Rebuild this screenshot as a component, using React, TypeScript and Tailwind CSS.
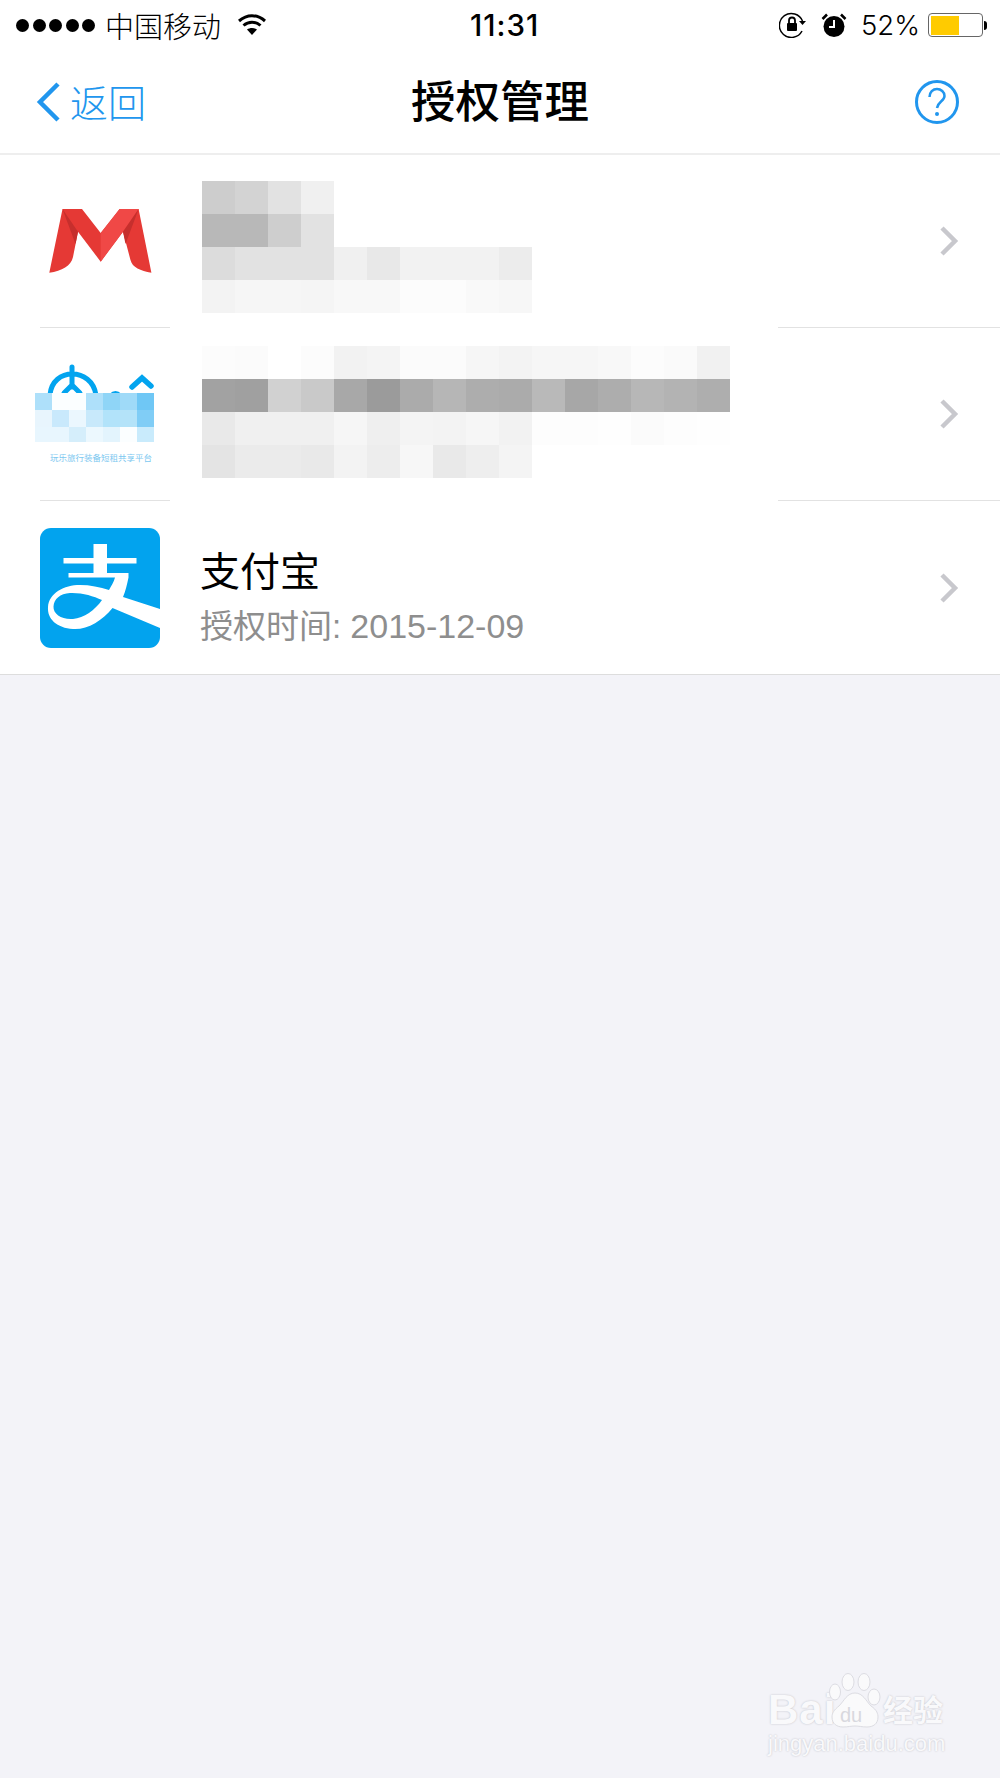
const grayRow1 = [
  ["bg-[#cdcdcd]", "bg-[#d3d3d3]", "bg-[#e2e2e2]", "bg-[#f0f0f0]", "", "", "", "", "", ""],
  ["bg-[#b8b8b8]", "bg-[#b8b8b8]", "bg-[#cecece]", "bg-[#e2e2e2]", "", "", "", "", "", ""],
  ["bg-[#dcdcdc]", "bg-[#e2e2e2]", "bg-[#e2e2e2]", "bg-[#e2e2e2]", "bg-[#f0f0f0]", "bg-[#e8e8e8]", "bg-[#f2f2f2]", "bg-[#f2f2f2]", "bg-[#f2f2f2]", "bg-[#ececec]"],
  ["bg-[#f3f3f3]", "bg-[#f6f6f6]", "bg-[#f6f6f6]", "bg-[#f5f5f5]", "bg-[#f8f8f8]", "bg-[#f8f8f8]", "bg-[#fcfcfc]", "bg-[#fcfcfc]", "bg-[#f9f9f9]", "bg-[#f7f7f7]"],
]

const grayRow2 = [
  ["bg-[#fcfcfc]", "bg-[#fbfbfb]", "bg-white", "bg-[#fcfcfc]", "bg-[#f2f2f2]", "bg-[#f4f4f4]", "bg-[#fbfbfb]", "bg-[#fbfbfb]", "bg-[#f6f6f6]", "bg-[#f3f3f3]", "bg-[#f6f6f6]", "bg-[#f6f6f6]", "bg-[#f8f8f8]", "bg-[#fcfcfc]", "bg-[#fafafa]", "bg-[#f1f1f1]"],
  ["bg-[#a2a2a2]", "bg-[#a0a0a0]", "bg-[#d1d1d1]", "bg-[#c9c9c9]", "bg-[#a8a8a8]", "bg-[#9b9b9b]", "bg-[#ababab]", "bg-[#b6b6b6]", "bg-[#adadad]", "bg-[#ababab]", "bg-[#b9b9b9]", "bg-[#a7a7a7]", "bg-[#adadad]", "bg-[#b7b7b7]", "bg-[#b3b3b3]", "bg-[#aeaeae]"],
  ["bg-[#e9e9e9]", "bg-[#f0f0f0]", "bg-[#f0f0f0]", "bg-[#f0f0f0]", "bg-[#f6f6f6]", "bg-[#efefef]", "bg-[#f4f4f4]", "bg-[#f3f3f3]", "bg-[#f6f6f6]", "bg-[#f2f2f2]", "bg-[#fdfdfd]", "bg-[#fdfdfd]", "bg-[#fefefe]", "bg-[#fbfbfb]", "bg-[#fdfdfd]", "bg-[#fefefe]"],
  ["bg-[#e4e4e4]", "bg-[#ebebeb]", "bg-[#ebebeb]", "bg-[#e9e9e9]", "bg-[#f3f3f3]", "bg-[#ededed]", "bg-[#f7f7f7]", "bg-[#e9e9e9]", "bg-[#eeeeee]", "bg-[#f4f4f4]", "", "", "", "", "", ""],
]

const blueCells = [
  ["bg-[#aee0fa]", "bg-[#fbfeff]", "bg-[#fbfeff]", "bg-[#aee0fa]", "bg-[#8fd5f7]", "bg-[#9fdaf8]", "bg-[#6fc7f5]"],
  ["bg-[#e8f5fd]", "bg-[#c9e9fc]", "bg-[#ebf7fe]", "bg-[#c8e9fb]", "bg-[#b2e3fa]", "bg-[#b4e3f9]", "bg-[#80cdf6]"],
  ["bg-[#e8f6fe]", "bg-[#e8f6fe]", "bg-[#d5eefb]", "bg-[#ecf8fe]", "bg-[#e3f4fd]", "bg-[#fbfeff]", "bg-[#c9ebfc]"],
]

function Chevron() {
  return (
    <svg className="w-[22px] h-[34px] self-center ml-auto mr-[40px]" viewBox="0 0 22 34" fill="none">
      <path d="M4 4l13 13L4 30" stroke="#c8c8cd" strokeWidth="4.5" />
    </svg>
  )
}

function Mosaic({ rows, className }: { rows: string[][]; className: string }) {
  return (
    <div className={className}>
      {rows.map((row, i) => (
        <div key={i} className="flex">
          {row.map((c, j) => (
            <div key={j} className={`w-[33px] h-[33px] ${c}`} />
          ))}
        </div>
      ))}
    </div>
  )
}

function Separator() {
  return (
    <div className="flex justify-between pl-10 h-px">
      <div className="w-[130px] bg-[#e2e2e2]" />
      <div className="w-[222px] bg-[#e2e2e2]" />
    </div>
  )
}

function MailLogo() {
  return (
    <svg className="w-[120px] h-[120px] shrink-0 mt-[26px]" viewBox="0 0 120 120">
      <path d="M22.5 28h19.5L60.7 52l18.9-24h19l12.8 63.7c-11-2-19-5-21-13L83 50.7 60.7 80.7 38 50.7 33 76c-2 9-11 14-23.7 15.7z" fill="#e53935" />
      <path d="M60.7 52L79.6 28h19L83 50.7 60.7 80.7z" fill="#f04846" />
      <path d="M22.5 28l15.5 22.700-2.500 12.300z" fill="#c62f2d" />
      <path d="M98.600 28L83 50.700l2.500 12.300z" fill="#c62f2d" />
    </svg>
  )
}

function RentLogo() {
  return (
    <div className="relative w-[120px] h-[120px] shrink-0 mt-[25px]">
      <svg className="w-[120px] h-[120px]" viewBox="0 0 120 120" fill="none" stroke="#02a4ef" strokeWidth="5" strokeLinecap="round">
        <path d="M10 42c2-28 42-28 46 0M32 14v20M24 40l8-8 8 8" />
        <path d="M92 34l10-9 9 8" strokeWidth="5.500" />
        <path d="M71 43c3-3 6-3 9 0" />
      </svg>
      <div className="absolute left-[-5px] top-[40px]">
        {blueCells.map((row, i) => (
          <div key={i} className={`flex ${i === 2 ? "h-[15px]" : "h-[17px]"}`}>
            {row.map((c, j) => (
              <div key={j} className={`w-[17px] ${c}`} />
            ))}
          </div>
        ))}
      </div>
      <div className="absolute left-[10px] top-[97px] text-[8.500px] leading-[14px] whitespace-nowrap text-[#7cc8f0] font-['Noto_Sans_CJK_SC',sans-serif]">
        玩乐旅行装备短租共享平台
      </div>
    </div>
  )
}

function AlipayLogo() {
  return (
    <div className="w-[120px] h-[120px] shrink-0 mt-[27px] rounded-[11px] bg-[#02a3ee] overflow-hidden">
      <svg className="w-[120px] h-[120px]" viewBox="0 0 120 120">
        <path
          fill="#fff"
          fillRule="evenodd"
          d="M53.500 16H67V30H96.500V35.500H67V45H88.500V49.500C87 57 85.500 63 83 69L120 81V100L72.500 80C62 93 47 102 33 101C17 100 7 91 8 79C9 65 24 57 40 57C50 57 60 59 69 62C71 58 74 54 75 49.500H28.500V45H53.500V35.500H23.500V30H53.500ZM13.500 78.500C13 86 22 92 33 91C44 90 55 82 62 72C53 68 42 64.500 30 65C20 65.500 14 71 13.500 78.500Z"
        />
      </svg>
    </div>
  )
}

function BaiduMark() {
  return (
    <div className="absolute left-[768px] top-[1668px] w-[190px] h-[90px] text-[#f9f9fb]">
      <div className="absolute left-0 top-[17px] font-['Liberation_Sans',sans-serif] font-bold text-[42px] leading-[50px] tracking-[1px] [text-shadow:0_0_2px_#bdbdc4]">
        Bai
      </div>
      <svg className="absolute left-[56px] top-0 w-[62px] h-[62px]" viewBox="0 0 62 62" fill="#fafafb" stroke="#dcdce2" strokeWidth="1">
        <ellipse cx="11" cy="24" rx="5.500" ry="8" />
        <ellipse cx="24" cy="14" rx="6" ry="8.500" />
        <ellipse cx="40" cy="14" rx="6" ry="8.500" />
        <ellipse cx="50" cy="29" rx="6" ry="8" />
        <path d="M31 25c8 0 11 8 16 13c6 4 7 8 7 11c0 7-5 10-11 10c-5 0-8-1-12-1s-7 1-12 1c-6 0-11-3-11-10c0-4 2-7 7-11c5-5 8-13 16-13z" />
      </svg>
      <div className="absolute left-[72px] top-[34px] font-['Liberation_Sans',sans-serif] text-[20px] leading-[26px] text-[#d8d8de]">
        du
      </div>
      <div className="absolute left-[115px] top-[20px] font-['Noto_Sans_CJK_SC',sans-serif] font-bold text-[30px] leading-[40px] whitespace-nowrap [text-shadow:0_0_2px_#bdbdc4]">
        经验
      </div>
      <div className="absolute left-0 top-[62px] font-['Liberation_Sans',sans-serif] text-[22px] leading-[28px] whitespace-nowrap [text-shadow:0_0_2px_#bdbdc4]">
        jingyan.baidu.com
      </div>
    </div>
  )
}

export default function App() {
  return (
    <div className="relative w-[1000px] h-[1778px] bg-[#f3f3f8] text-black font-['Liberation_Sans','Noto_Sans_CJK_SC',sans-serif] overflow-hidden">
      {/* status bar */}
      <div className="bg-white h-[50px] flex items-center pl-4 pr-[13px] relative">
        <div className="flex gap-[3.500px]">
          <div className="w-[13px] h-[13px] rounded-full bg-black" />
          <div className="w-[13px] h-[13px] rounded-full bg-black" />
          <div className="w-[13px] h-[13px] rounded-full bg-black" />
          <div className="w-[13px] h-[13px] rounded-full bg-black" />
          <div className="w-[13px] h-[13px] rounded-full bg-black" />
        </div>
        <div className="ml-[10px] text-[29px] leading-[36px] font-['Noto_Sans_CJK_SC',sans-serif] font-light">中国移动</div>
        <svg className="ml-4 w-[30px] h-[22px]" viewBox="0 0 30 22" fill="none" stroke="#000" strokeWidth="3">
          <path d="M2 7c8-7 18-7 26 0M6.500 11.500c5-4.500 12-4.500 17 0" />
          <path d="M10 15.500c3-2 7-2 10 0l-5 5.500z" fill="#000" stroke="none" />
        </svg>
        <div className="absolute left-[470px] top-[7px] text-[29.500px] leading-[36px] tracking-[1px] font-medium font-['Inter',sans-serif]">11:31</div>
        <svg className="ml-auto w-[28px] h-[26px]" viewBox="0 0 28 26" fill="none" stroke="#000" strokeWidth="1.500">
          <path d="M23 19a12 12 0 1 1 .5-10" />
          <path d="M20 9h7l-3.500 4z" fill="#000" stroke="none" />
          <rect x="8" y="11" width="10" height="8" rx="1" fill="#000" stroke="none" />
          <path d="M10 11V8.500a3 3 0 0 1 6 0V11" strokeWidth="1.800" />
        </svg>
        <svg className="ml-[14px] w-[26px] h-[26px]" viewBox="0 0 26 26">
          <circle cx="13" cy="14.500" r="10.500" fill="#000" />
          <path d="M13 8v7H8" fill="none" stroke="#fff" strokeWidth="2" />
          <path d="M1.500 7L6 2.500M24.500 7L20 2.500" stroke="#000" strokeWidth="2.500" />
        </svg>
        <div className="ml-[14px] text-[27.500px] leading-[36px] font-['Inter',sans-serif] font-light">52%</div>
        <div className="ml-[8px] w-[55px] h-[24px] border border-[#666] rounded-[4px] p-[1.500px] flex">
          <div className="w-[28px] bg-[#ffcb00]" />
        </div>
        <div className="ml-[1px] w-[3px] h-[9px] bg-black rounded-r-full" />
      </div>

      {/* nav bar */}
      <div className="bg-white h-[105px] border-b-2 border-[#eeeeee] flex items-center relative pl-[35px] pr-[40px]">
        <svg className="w-[26px] h-[42px]" viewBox="0 0 26 42" fill="none">
          <path d="M23 3L5 21l18 18" stroke="#2196ee" strokeWidth="4.500" />
        </svg>
        <div className="ml-[9px] mt-[-2px] text-[38px] leading-[44px] text-[#2196ee] font-['Noto_Sans_CJK_SC',sans-serif] font-light">返回</div>
        <div className="absolute left-0 right-0 top-[23px] text-center text-[44.500px] leading-[52px] font-medium font-['Noto_Sans_CJK_SC',sans-serif]">授权管理</div>
        <svg className="ml-auto w-[46px] h-[46px]" viewBox="0 0 46 46" fill="none">
          <circle cx="23" cy="23" r="20.500" stroke="#2196ee" strokeWidth="3" />
          <path d="M15.500 18c0-5 3.500-8 7.500-8s7.500 3 7.500 7c0 5-6.500 5.500-7.500 12" stroke="#2196ee" strokeWidth="2.500" />
          <circle cx="23" cy="35" r="2" fill="#2196ee" />
        </svg>
      </div>

      {/* list */}
      <div className="bg-white border-b border-[#dddddd] relative">
        <div className="flex h-[172px] pl-10">
          <MailLogo />
          <Mosaic rows={grayRow1} className="ml-[42px] mt-[26px]" />
          <Chevron />
        </div>
        <Separator />
        <div className="flex h-[172px] pl-10">
          <RentLogo />
          <Mosaic rows={grayRow2} className="ml-[42px] mt-[18px]" />
          <Chevron />
        </div>
        <Separator />
        <div className="flex h-[173px] pl-10">
          <AlipayLogo />
          <div className="ml-[40px] mt-[43px]">
            <div className="text-[40px] leading-[50px] font-['Noto_Sans_CJK_SC',sans-serif]">支付宝</div>
            <div className="text-[33px] leading-[42px] mt-[11px] text-[#8e8e8e] font-['Liberation_Sans','Noto_Sans_CJK_SC',sans-serif]">
              授权时间: <span className="text-[34px]">2015-12-09</span>
            </div>
          </div>
          <Chevron />
        </div>
      </div>

      <BaiduMark />
    </div>
  )
}
